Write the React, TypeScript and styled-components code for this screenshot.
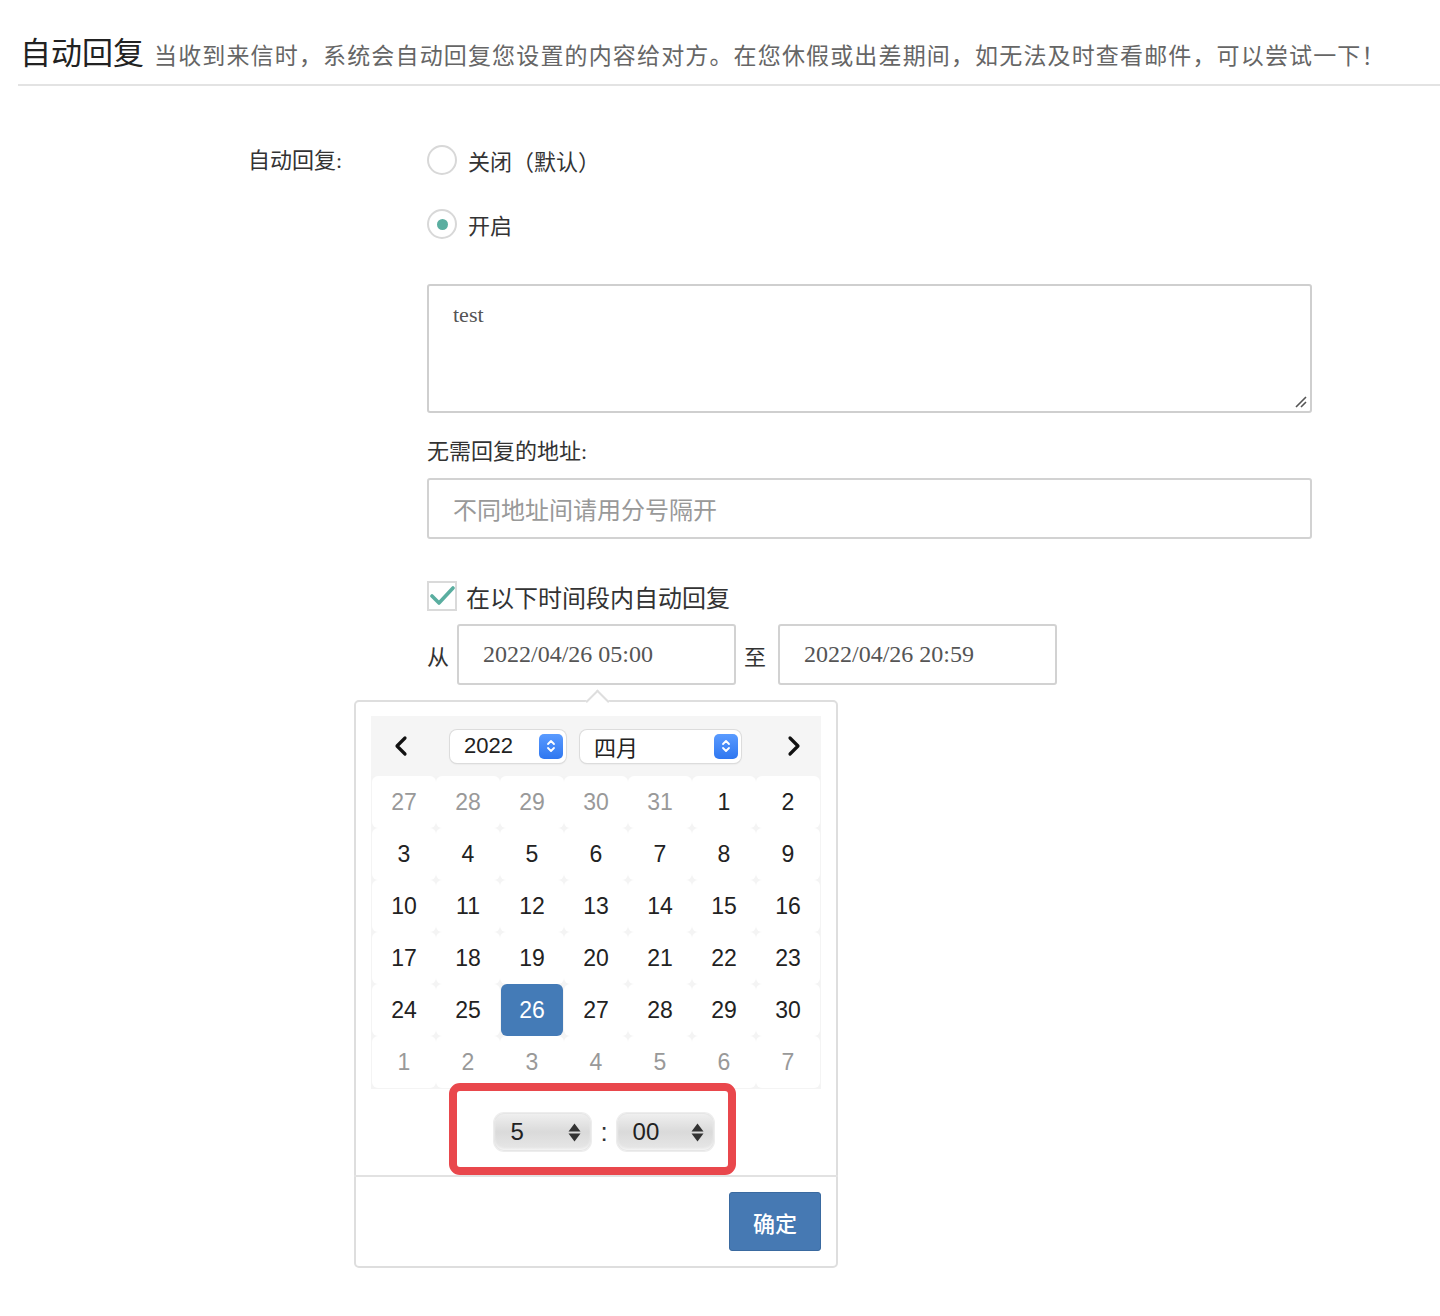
import React from 'react';
import styled, { createGlobalStyle, css } from 'styled-components';

const GlobalStyle = createGlobalStyle`
  html, body {
    margin: 0;
    padding: 0;
    background: #fff;
  }
  body {
    font-family: "Liberation Serif", "Noto Sans CJK SC", serif;
    color: #333;
  }
`;

const Page = styled.div`
  width: 1440px;
  height: 1316px;
  padding-left: 18px;
  box-sizing: border-box;
  overflow: hidden;
`;

const Header = styled.div`
  display: flex;
  align-items: baseline;
  gap: 10px;
  height: 86px;
  padding: 28px 0 0 2px;
  box-sizing: border-box;
  border-bottom: 2px solid #e3e3e3;
`;

const Title = styled.h1`
  margin: 0;
  font-size: 31px;
  font-weight: 400;
  color: #222;
  letter-spacing: 0;
`;

const Subtitle = styled.span`
  font-size: 23px;
  letter-spacing: 1.15px;
  color: #666;
`;

const Form = styled.div`
  display: grid;
  grid-template-columns: 179px 885px;
  padding: 59px 0 0 230px;
`;

const FieldLabel = styled.div`
  font-size: 22px;
  color: #333;
  line-height: 32px;
`;

const Controls = styled.div`
  display: flex;
  flex-direction: column;
`;

const RadioRow = styled.label`
  display: flex;
  align-items: center;
  gap: 11px;
  height: 30px;
  font-size: 22px;
  color: #333;
  margin-bottom: 34px;
`;

const RadioCircle = styled.span<{ checked?: boolean }>`
  width: 26px;
  height: 26px;
  border-radius: 50%;
  border: 2px solid #d8d8d8;
  background: #fff;
  display: flex;
  align-items: center;
  justify-content: center;
  flex-shrink: 0;
  ${({ checked }) =>
    checked &&
    css`
      &::after {
        content: '';
        width: 11px;
        height: 11px;
        border-radius: 50%;
        background: #5aaea0;
      }
    `}
`;

const TextArea = styled.div`
  position: relative;
  height: 129px;
  border: 2px solid #cfcfcf;
  border-radius: 3px;
  box-sizing: border-box;
  padding: 16px 24px;
  font-size: 22px;
  color: #555;
  margin-top: 11px;
`;

const Grip = styled.svg`
  position: absolute;
  right: 3px;
  bottom: 3px;
`;

const SubLabel = styled.div`
  font-size: 22px;
  color: #333;
  margin-top: 24px;
  line-height: 30px;
`;

const TextInput = styled.div<{ placeholder?: boolean }>`
  height: 61px;
  border: 2px solid #d2d2d2;
  border-radius: 3px;
  box-sizing: border-box;
  display: flex;
  align-items: center;
  padding-left: 24px;
  font-size: 24px;
  color: ${({ placeholder }) => (placeholder ? '#999' : '#555')};
`;

const AddressInput = styled(TextInput)`
  margin-top: 11px;
`;

const CheckRow = styled.label`
  display: flex;
  align-items: center;
  gap: 9px;
  margin-top: 41px;
  font-size: 24px;
  color: #333;
  height: 32px;
`;

const CheckBox = styled.span`
  width: 30px;
  height: 30px;
  border: 2px solid #dadada;
  box-sizing: border-box;
  display: flex;
  align-items: center;
  justify-content: center;
`;

const RangeRow = styled.div`
  position: relative;
  display: flex;
  align-items: center;
  margin-top: 12px;
  font-size: 22px;
  color: #333;
`;

const RangeWord = styled.span<{ gapLeft?: number; gapRight?: number }>`
  margin: 0 ${({ gapRight }) => gapRight ?? 8}px 0 ${({ gapLeft }) => gapLeft || 0}px;
`;

const DateInput = styled(TextInput)`
  width: 279px;
  padding-left: 24px;
  color: #555;
`;

const Popup = styled.div`
  position: absolute;
  top: 76px;
  left: -73px;
  width: 484px;
  height: 568px;
  box-sizing: border-box;
  border: 2px solid #dedede;
  border-radius: 5px;
  background: #fff;
  font-family: "Liberation Sans", "Noto Sans CJK SC", sans-serif;
  &::before {
    content: '';
    position: absolute;
    top: -9px;
    left: 233px;
    width: 15px;
    height: 15px;
    background: #fff;
    border-left: 2px solid #dedede;
    border-top: 2px solid #dedede;
    transform: rotate(45deg);
  }
`;

const Calendar = styled.div`
  margin: 14px 15px 0 15px;
`;

const CalHead = styled.div`
  display: flex;
  align-items: center;
  justify-content: space-between;
  height: 60px;
  background: #f5f5f5;
  padding: 0 19px 0 22px;
`;

const SelectGroup = styled.div`
  display: flex;
  gap: 14px;
  margin-right: 4px;
`;

const NavBtn = styled.span`
  display: flex;
  align-items: center;
  width: 16px;
`;

const SelectBox = styled.div<{ w: number }>`
  width: ${({ w }) => w}px;
  height: 33px;
  box-sizing: border-box;
  background: #fff;
  border-radius: 7px;
  box-shadow: 0 0 0 1px #dcdcdc, 0 1px 2px rgba(0, 0, 0, 0.12);
  display: flex;
  align-items: center;
  justify-content: space-between;
  padding: 0 3px 0 14px;
  font-size: 22px;
  color: #222;
`;

const Stepper = styled.span`
  width: 24px;
  height: 25px;
  border-radius: 5px;
  background: linear-gradient(#5a9bff, #2f77f0);
  display: flex;
  align-items: center;
  justify-content: center;
`;

const Grid = styled.div`
  display: grid;
  grid-template-columns: repeat(7, 1fr);
  grid-auto-rows: 52px;
  background: #f4f4f4;
  padding: 0 1px 1px 1px;
`;

const Day = styled.div<{ muted?: boolean; active?: boolean }>`
  display: flex;
  align-items: center;
  justify-content: center;
  background: #fff;
  border-radius: 6px;
  font-size: 23px;
  color: ${({ muted }) => (muted ? '#999' : '#222')};
  ${({ active }) =>
    active &&
    css`
      margin: 0 1px;
      background: #447bb7;
      color: #fff;
    `}
`;

const TimeRow = styled.div`
  position: relative;
  height: 86px;
  display: flex;
  align-items: center;
  justify-content: center;
  gap: 9px;
  padding-left: 16px;
  border-bottom: 2px solid #e2e2e2;
  margin: 0 -2px;
`;

const TimeSelect = styled.div`
  width: 97px;
  height: 38px;
  box-sizing: border-box;
  border-radius: 10px;
  background: linear-gradient(#f0f0f0, #dadada 50%, #e8e8e8);
  box-shadow: inset 0 0 0 1px #e6e6e6, inset 0 -2px 3px rgba(255, 255, 255, 0.7), 0 0 0 1px #ededed;
  display: flex;
  align-items: center;
  justify-content: space-between;
  padding: 0 10px 0 16px;
  font-size: 24px;
  color: #222;
`;

const Arrows = styled.span`
  display: flex;
  flex-direction: column;
  gap: 1px;
`;

const Colon = styled.span`
  font-size: 26px;
  color: #333;
`;

const Highlight = styled.div`
  position: absolute;
  left: 95px;
  top: -6px;
  width: 287px;
  height: 92px;
  box-sizing: border-box;
  border: 8px solid #e9474c;
  border-radius: 11px;
  pointer-events: none;
`;

const Footer = styled.div`
  display: flex;
  justify-content: flex-end;
  padding: 15px 15px 0 0;
`;

const OkButton = styled.button`
  width: 92px;
  height: 59px;
  border: 1px solid #3a6aa0;
  border-radius: 3px;
  background: #4679b3;
  color: #fff;
  font-size: 22px;
  font-family: "Noto Sans CJK SC", sans-serif;
  font-weight: 500;
`;

const weeks: { d: number; m?: boolean }[][] = [
  [{ d: 27, m: true }, { d: 28, m: true }, { d: 29, m: true }, { d: 30, m: true }, { d: 31, m: true }, { d: 1 }, { d: 2 }],
  [3, 4, 5, 6, 7, 8, 9].map((d) => ({ d })),
  [10, 11, 12, 13, 14, 15, 16].map((d) => ({ d })),
  [17, 18, 19, 20, 21, 22, 23].map((d) => ({ d })),
  [24, 25, 26, 27, 28, 29, 30].map((d) => ({ d })),
  [1, 2, 3, 4, 5, 6, 7].map((d) => ({ d, m: true })),
];

const Chevron = ({ dir }: { dir: 'left' | 'right' }) => (
  <svg width="16" height="22" viewBox="0 0 16 22">
    <path
      d={dir === 'left' ? 'M12 3 L4 11 L12 19' : 'M4 3 L12 11 L4 19'}
      fill="none"
      stroke="#111"
      strokeWidth="3.2"
      strokeLinecap="round"
      strokeLinejoin="round"
    />
  </svg>
);

const StepIcon = () => (
  <svg width="12" height="16" viewBox="0 0 12 16">
    <path d="M3 6 L6 3 L9 6 M3 10 L6 13 L9 10" fill="none" stroke="#fff" strokeWidth="1.8" strokeLinecap="round" strokeLinejoin="round" />
  </svg>
);

const UpDown = () => (
  <Arrows>
    <svg width="13" height="9" viewBox="0 0 13 9">
      <path d="M6.5 0.5 L12.5 8.5 L0.5 8.5 Z" fill="#333" />
    </svg>
    <svg width="13" height="9" viewBox="0 0 13 9">
      <path d="M0.5 0.5 L12.5 0.5 L6.5 8.5 Z" fill="#333" />
    </svg>
  </Arrows>
);

const App = () => {
  return (
    <Page>
      <GlobalStyle />
      <Header>
        <Title>自动回复</Title>
        <Subtitle>当收到来信时，系统会自动回复您设置的内容给对方。在您休假或出差期间，如无法及时查看邮件，可以尝试一下！</Subtitle>
      </Header>
      <Form>
        <FieldLabel>自动回复:</FieldLabel>
        <Controls>
          <RadioRow>
            <RadioCircle />
            关闭（默认）
          </RadioRow>
          <RadioRow>
            <RadioCircle checked />
            开启
          </RadioRow>
          <TextArea>
            test
            <Grip width="14" height="14" viewBox="0 0 14 14">
              <path d="M13 3 L3 13 M13 8 L8 13" stroke="#555" strokeWidth="1.6" />
            </Grip>
          </TextArea>
          <SubLabel>无需回复的地址:</SubLabel>
          <AddressInput placeholder>不同地址间请用分号隔开</AddressInput>
          <CheckRow>
            <CheckBox>
              <svg width="26" height="22" viewBox="0 0 26 22">
                <path d="M3 11 L10 18 L24 3" fill="none" stroke="#5aaea0" strokeWidth="3.6" strokeLinecap="round" strokeLinejoin="round" />
              </svg>
            </CheckBox>
            在以下时间段内自动回复
          </CheckRow>
          <RangeRow>
            <RangeWord>从</RangeWord>
            <DateInput>2022/04/26 05:00</DateInput>
            <RangeWord gapLeft={8} gapRight={12}>至</RangeWord>
            <DateInput>2022/04/26 20:59</DateInput>
            <Popup>
              <Calendar>
                <CalHead>
                  <NavBtn>
                    <Chevron dir="left" />
                  </NavBtn>
                  <SelectGroup>
                    <SelectBox w={116}>
                      2022
                      <Stepper>
                        <StepIcon />
                      </Stepper>
                    </SelectBox>
                    <SelectBox w={161}>
                      四月
                      <Stepper>
                        <StepIcon />
                      </Stepper>
                    </SelectBox>
                  </SelectGroup>
                  <NavBtn>
                    <Chevron dir="right" />
                  </NavBtn>
                </CalHead>
                <Grid>
                  {weeks.map((w, i) =>
                    w.map((c, j) => (
                      <Day key={`${i}-${j}`} muted={c.m} active={i === 4 && c.d === 26}>
                        {c.d}
                      </Day>
                    ))
                  )}
                </Grid>
              </Calendar>
              <TimeRow>
                <TimeSelect>
                  5
                  <UpDown />
                </TimeSelect>
                <Colon>:</Colon>
                <TimeSelect>
                  00
                  <UpDown />
                </TimeSelect>
                <Highlight />
              </TimeRow>
              <Footer>
                <OkButton>确定</OkButton>
              </Footer>
            </Popup>
          </RangeRow>
        </Controls>
      </Form>
    </Page>
  );
};

export default App;
